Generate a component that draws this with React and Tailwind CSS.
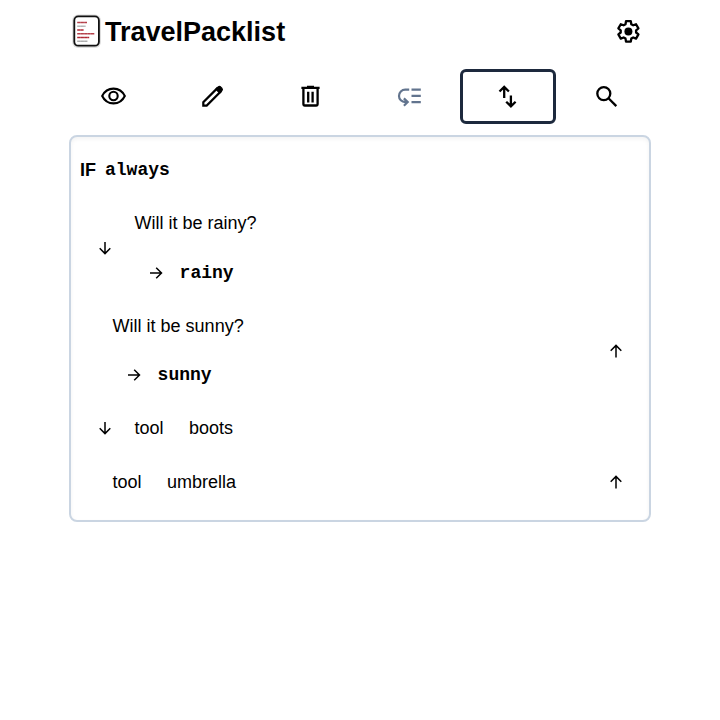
import React from "react";

function Stroke({ className = "size-7", width = 2, children }) {
  return (
    <svg viewBox="0 0 28 28" className={className} fill="none" stroke="currentColor" strokeWidth={width}>
      {children}
    </svg>
  );
}

function Logo() {
  const rows = [
    [5.2, 15, "#b5404a"],
    [5.2, 13.6, "#b4b4b4"],
    [5.2, 11.6, "#b02834"],
    [5.2, 22.4, "#b5404a"],
    [5.2, 17.2, "#b02834"],
    [5.2, 15.6, "#adadad"],
  ];
  return (
    <svg viewBox="0 0 28 34" className="h-[34px] w-7 overflow-visible">
      <rect x="0.2" y="-0.5" width="28.8" height="33.4" rx="6" fill="#dedede" />
      <rect x="2.3" y="1.4" width="24.6" height="29.3" rx="4" fill="#fff" stroke="#111" strokeWidth="1.8" />
      {rows.map(([x1, x2, color], i) => (
        <path key={i} d={`M${x1} ${7.5 + i * 3.75}H${x2}`} stroke={color} strokeWidth="1.5" strokeDasharray="3.3 .15" />
      ))}
    </svg>
  );
}

const gearPoints = [0, 1, 2, 3, 4, 5]
  .flatMap((tooth) => {
    const a = (tooth * Math.PI) / 3;
    return [[-2.9, -7.2], [-2.4, -10.2], [2.4, -10.2], [2.9, -7.2]].map(
      ([x, y]) => `${(x * Math.cos(a) - y * Math.sin(a)).toFixed(2)},${(x * Math.sin(a) + y * Math.cos(a)).toFixed(2)}`
    );
  })
  .join(" ");

function Gear() {
  return (
    <Stroke width={2.3}>
      <g transform="translate(13.4 13.4)">
        <polygon points={gearPoints} strokeLinejoin="round" />
        <circle r="4" fill="currentColor" stroke="none" />
      </g>
    </Stroke>
  );
}

const tools = [
  {
    name: "View",
    icon: (
      <Stroke width={2.1}>
        <path d="M3.2 14C5.7 8.8 9.7 6.6 14.5 6.6S23.3 8.8 25.8 14C23.3 19.2 19.3 21.4 14.5 21.4S5.7 19.2 3.2 14z" />
        <circle cx="14.5" cy="14" r="4.2" />
      </Stroke>
    ),
  },
  {
    name: "Edit",
    icon: (
      <Stroke width={2.2}>
        <path d="M5.3 23.6v-3.4L19.1 6.4l3.4 3.4L8.7 23.6z" />
        <path d="M18 7.2l2.2-2.2q1.3-1 2.5.1l1.1 1.1q1.1 1.2.1 2.5L21.7 11z" fill="currentColor" strokeWidth="1.3" />
      </Stroke>
    ),
  },
  {
    name: "Delete",
    icon: (
      <Stroke width={2.3}>
        <path d="M4.4 5.9h18.2M10 4.9h7M6.4 5.9v16.2q0 1.4 1.4 1.4h11.4q1.4 0 1.4-1.4V5.9M11.2 9.8v10.6M15.6 9.8v10.6" />
      </Stroke>
    ),
  },
  {
    name: "Sort",
    muted: true,
    icon: (
      <Stroke width={2.2}>
        <path d="M16.5 7.7h9.3M16.5 13.9h9.3M16.5 20.1h9.3M14.2 7.7h-4a6.1 6.1 0 0 0 0 12.4h3M8.9 16.4l3.8 3.7-3.8 3.6" />
      </Stroke>
    ),
  },
  {
    name: "Reorder",
    active: true,
    icon: (
      <Stroke width={2.3}>
        <path d="M10.2 16V5M5.5 9.5l4.7-4.6 4.7 4.6M16.9 13.6v10.7M12.2 19.7l4.7 4.6 4.7-4.6" />
      </Stroke>
    ),
  },
  {
    name: "Search",
    icon: (
      <Stroke width={2.3}>
        <circle cx="10.8" cy="11.6" r="6.5" />
        <path d="M15.5 16.3l7.8 7.8" />
      </Stroke>
    ),
  },
];

const arrowPaths = {
  down: "M10 3.9V15.5M4.7 10.3L10 15.6l5.3-5.3",
  up: "M10 16.5V4.5M4.7 9.7L10 4.4l5.3 5.3",
  right: "M4 10h11.5M10.2 4.7L15.5 10l-5.3 5.3",
};

function Arrow({ direction }) {
  return (
    <svg viewBox="0 0 20 20" className="size-5 shrink-0" fill="none" stroke="#000" strokeWidth="1.5">
      <path d={arrowPaths[direction]} />
    </svg>
  );
}

function Question({ text, variable }) {
  return (
    <div className="flex flex-col gap-[21.5px]">
      <div className="h-7">{text}</div>
      <div className="flex h-7 items-center pl-[11px]">
        <Arrow direction="right" />
        <span className="ml-3.5 font-['Liberation_Mono',monospace] font-bold">{variable}</span>
      </div>
    </div>
  );
}

function Item({ name }) {
  return (
    <div className="flex h-7 gap-[25.4px]">
      <span>tool</span>
      <span>{name}</span>
    </div>
  );
}

export default function App() {
  return (
    <div className="min-h-screen bg-white px-16 font-['Liberation_Sans',Arial,sans-serif] text-lg text-black">
      <header className="flex h-16 items-center justify-between pr-[13px] pl-2">
        <div className="flex items-center gap-[5px]">
          <Logo />
          <h1 className="text-[27px] leading-9 font-bold">TravelPacklist</h1>
        </div>
        <button aria-label="Settings"><Gear /></button>
      </header>
      <nav className="grid grid-cols-6 pt-[5px]">
        {tools.map(({ name, icon, muted, active }) => (
          <button
            key={name}
            aria-label={name}
            className={`mx-auto flex h-[55px] w-24 items-center justify-center rounded-md border-3 pb-px ${active ? "border-slate-800" : "border-transparent"} ${muted ? "text-slate-500" : "text-black"}`}
          >
            {icon}
          </button>
        ))}
      </nav>
      <main className="mx-[5px] mt-[11px] h-[387px] rounded-lg border-2 border-slate-300 pt-[19px] pr-[23px] pl-[9px] shadow-[inset_0_2px_4px_rgba(0,0,0,0.05)]">
        <div className="flex h-7 items-center gap-[9px]">
          <span className="font-bold">IF</span>
          <span className="font-['Liberation_Mono',monospace] font-bold">always</span>
        </div>
        <div className="mt-[25.2px] flex items-center gap-[19.6px] pl-[15px]">
          <Arrow direction="down" />
          <Question text="Will it be rainy?" variable="rainy" />
        </div>
        <div className="mt-[25px] flex items-center justify-between pl-[32.6px]">
          <Question text="Will it be sunny?" variable="sunny" />
          <div className="pt-[2px]">
            <Arrow direction="up" />
          </div>
        </div>
        <div className="mt-[25px] flex items-center gap-[19.6px] pl-[15px]">
          <Arrow direction="down" />
          <Item name="boots" />
        </div>
        <div className="mt-[26px] flex items-center justify-between pl-[32.6px]">
          <Item name="umbrella" />
          <Arrow direction="up" />
        </div>
      </main>
    </div>
  );
}
